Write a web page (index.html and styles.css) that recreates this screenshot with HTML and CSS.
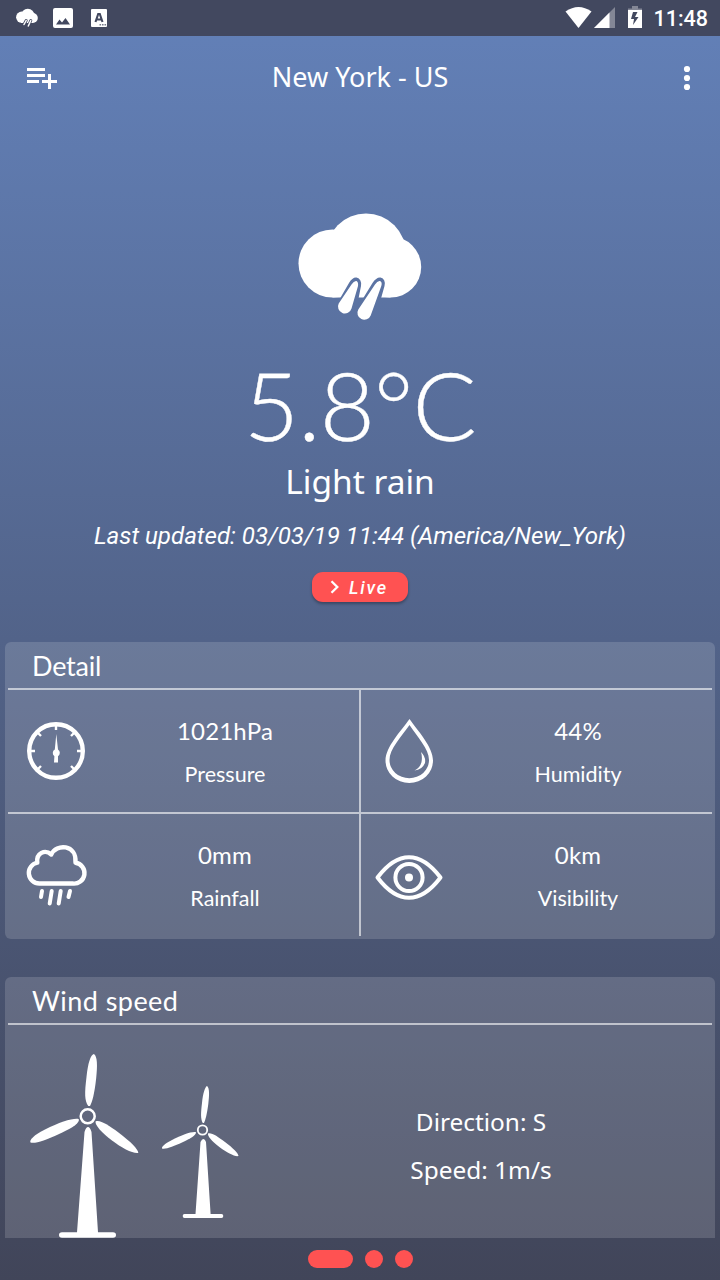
FILE: index.html
```html
<!DOCTYPE html>
<html lang="en">
<head>
<meta charset="utf-8">
<title>Weather</title>
<link rel="stylesheet" href="styles.css">
</head>
<body>
<div class="screen">
  <header class="status">
    <svg class="status-icons" width="110" height="36" viewBox="0 0 110 36" fill="#fff">
      <circle cx="21.700" cy="17.200" r="5.600"/><circle cx="27.800" cy="15.500" r="6.700"/><circle cx="32.800" cy="18" r="5"/><path d="M21 15h12v8H21z"/>
      <path d="M24 24.500l2.200-4M28.300 26l2.500-5.500" stroke="#42485f" stroke-width="3" stroke-linecap="round"/>
      <path d="M24 24.500l2.200-4M28.300 26l2.500-5.500" stroke="#fff" stroke-width="1.500" stroke-linecap="round"/>
      <path fill-rule="evenodd" d="M55 8h16q2 0 2 2v16q0 2-2 2H55q-2 0-2-2V10q0-2 2-2zM56 24.500h14l-4.500-6.500-3.500 4.500-2.500-3z"/>
      <path d="M92 9h14q1 0 1 1v16q0 1-1 1H92q-1 0-1-1V10q0-1 1-1z"/>
      <path d="M95.500 22l2.700-8h1.600l2.700 8M96.500 19.500h5" fill="none" stroke="#42485f" stroke-width="2.100"/>
      <path d="M99.500 24h1.600v1.600h-1.600zM102 24h1.600v1.600H102zM104.500 24h1.600v1.600h-1.600z" fill="#777c8c"/>
    </svg>
    <div class="status-right">
      <svg width="80" height="36" viewBox="566 0 80 36" fill="#fff">
        <path d="M566.500 11.500Q579.500 2.500 592.500 11.500L579.500 28z"/>
        <path d="M616 7v21h-21z" opacity=".35"/><path d="M610.500 12.500V28H595z"/>
        <path d="M629 8.500h4V6h6v2.500h4V10h-14z" opacity=".35"/>
        <path fill-rule="evenodd" d="M629 10h14v18h-14zM634 12l-2 7h3l-1 6 5.500-8H636l2.500-5z"/>
      </svg>
      <span class="clock">11:48</span>
    </div>
  </header>

  <nav class="toolbar">
    <svg width="32" height="24" viewBox="26 67 32 24" fill="#fff"><path d="M27 69h18v3H27zM27 75h18v3H27zM27 81h12v3H27zM42 81h15v3H42zM48 75h3v15h-3z"/></svg>
    <h1 class="city">New York - US</h1>
    <svg width="32" height="26" viewBox="671 65 32 26" fill="#fff"><circle cx="687" cy="69" r="3.100"/><circle cx="687" cy="78" r="3.100"/><circle cx="687" cy="87" r="3.100"/></svg>
  </nav>

  <main class="content">
    <section class="now">
      <svg class="cloud" width="126" height="112" viewBox="297 211 126 112" fill="#fff">
        <defs><mask id="rain-gap" maskUnits="userSpaceOnUse" x="297" y="211" width="126" height="112">
          <path fill="#fff" d="M297 211h126v112H297z"/>
          <path fill="#000" d="M340 298.500L349 283Q352.500 277 356.500 277.500Q362 279 361 286L358.500 298.500zM363 298.500L372.500 283Q376.500 277 380.500 277.500Q386 279 384.500 286L381 298.500z"/>
        </mask></defs>
        <g mask="url(#rain-gap)"><circle cx="332.500" cy="263.500" r="34"/><circle cx="366" cy="253.500" r="40"/><circle cx="390.700" cy="267" r="30.500"/><path d="M332.500 250h58v47.500h-58z"/></g>
        <path d="M351.500 284.500Q354 280.500 356.500 281Q358.500 282 358 286L351.500 308.500A6.900 6.900 0 1 1 338.700 303.500zM375 284.500Q377.500 280.500 380 281Q382.500 282 381.300 286L370.700 315.500A6.900 6.900 0 1 1 358.300 309.500z"/>
      </svg>
      <div class="temp">5.8°C</div>
      <div class="condition">Light rain</div>
      <div class="updated">Last updated: 03/03/19 11:44 (America/New_York)</div>
      <button class="live"><svg width="10" height="16" viewBox="0 0 10 16"><path d="M1.500 2.200L7.300 8l-5.800 5.800" fill="none" stroke="#fff" stroke-width="2.300"/></svg><span>Live</span></button>
    </section>

    <section class="card">
      <h2 class="card-title">Detail</h2>
      <div class="grid">
        <div class="cell">
          <svg width="96" height="122" viewBox="8 690 96 122" fill="none" stroke="#fff">
            <circle cx="56" cy="751" r="26.800" stroke-width="4.400"/>
            <path stroke-width="2.400" d="M56 724v6M29 751h6M77 751h6M37 732l4 4M75 732l-4 4M37 770l4-4M75 770l-4-4"/>
            <path fill="#fff" stroke="none" d="M56.300 734L58 749.500A4 4 0 0 1 58 756.200L58 762.500h-4l.4-6.300A4 4 0 0 1 54.800 749.500z"/>
          </svg>
          <div class="reading"><span class="value">1021hPa</span><span class="label">Pressure</span></div>
        </div>
        <div class="cell cell-right">
          <svg width="96" height="122" viewBox="361 690 96 122" fill="#fff">
            <path fill-rule="evenodd" d="M409.500 719C418 731 433 747 433 760.500A23.700 22.500 0 0 1 385.500 760.500C385.500 747 401 731 409.500 719zM409.500 725C401 737 389.500 749 389.500 760A19.700 18.200 0 0 0 429 760C429 749 417.500 737 409.500 725z"/>
            <path d="M421 752Q426 757 425 763Q422 770 414.500 770.500Q420 768 421.500 762Q422.500 757 421 752z"/>
          </svg>
          <div class="reading"><span class="value">44%</span><span class="label">Humidity</span></div>
        </div>
        <div class="cell cell-bottom">
          <svg width="96" height="122" viewBox="8 814 96 122" fill="none" stroke="#fff" stroke-width="4.400" stroke-linecap="round">
            <path stroke-linejoin="round" d="M39.500 883.500a10.500 10.500 0 0 1-2.200-20.800C36 853 45 849 51.300 854.500C56 843.500 77 844 75.500 862.700A10.500 10.500 0 0 1 72.500 883.500z"/>
            <path stroke-width="4" d="M42 891l-1 6M51.700 891l-2 12.500M60.700 891l-2 12.500M70 891l-1.500 6"/>
          </svg>
          <div class="reading"><span class="value">0mm</span><span class="label">Rainfall</span></div>
        </div>
        <div class="cell cell-right cell-bottom">
          <svg width="96" height="122" viewBox="361 814 96 122" fill="none" stroke="#fff" stroke-width="4" stroke-linejoin="round">
            <path d="M377.500 877.500C398 850.500 420 850.500 440.500 877.500C420 904.500 398 904.500 377.500 877.500z"/>
            <circle cx="409" cy="877.500" r="13.600"/><circle cx="409" cy="877.500" r="4" fill="#fff" stroke="none"/>
          </svg>
          <div class="reading"><span class="value">0km</span><span class="label">Visibility</span></div>
        </div>
      </div>
    </section>

    <section class="card card-wind">
      <h2 class="card-title title-wind">Wind speed</h2>
      <div class="wind">
        <svg width="242" height="213" viewBox="8 1025 242 213" fill="#fff">
          <path d="M88.300 1106C84.500 1101 84.500 1093 86.500 1077C88 1063 90.500 1055 93.800 1054C97.500 1056 97.500 1066 96.200 1078C94.500 1094 92 1103 90 1106z"/>
          <path d="M78.500 1119C73 1118 60 1122 45 1129.500C34 1135 29 1140 30.500 1142.500C35 1144 46 1140 58 1134.500C70 1129 78 1125 79 1120z"/>
          <path d="M95.500 1121.500C100 1119.500 108 1125 118.500 1132.500C131 1142 138 1149 138.300 1153C133 1154 122 1148 112 1140.500C101 1132 95 1125 95.500 1121.500z"/>
          <circle cx="87.700" cy="1116.300" r="7" fill="none" stroke="#fff" stroke-width="2.500"/>
          <path d="M84.500 1132Q86 1127 88 1127Q90 1127 91.500 1132L98 1232.300h15q3 0 3 2.700t-3 2.700H62q-3 0-3-2.700t3-2.700h15z"/>
          <path d="M202.800 1123C200.500 1119 200.800 1113 202 1103C203 1093 205 1087 207 1086C209.800 1088 209.300 1096 208.300 1104C207 1114 205.500 1120 204 1123z"/>
          <path d="M196 1132.200C191 1131.500 182 1135 172 1140C164 1144 161.500 1147 162 1148.500C166 1149.500 174 1146 182 1142.500C191 1138 196 1135.500 196 1132.200z"/>
          <path d="M208 1133.500C212 1132.500 218 1137 225 1142C233 1148 238.500 1153.500 238.500 1156C235 1157 227 1152.500 220 1147.500C211 1140.500 207.500 1136 208 1133.500z"/>
          <circle cx="202.500" cy="1130" r="4.700" fill="none" stroke="#fff" stroke-width="1.800"/>
          <path d="M200.500 1142Q202 1139 203.300 1139Q205 1139 206 1142L210.600 1214H221.500q1.800 0 1.800 2t-1.800 2H184.500q-1.800 0-1.800-2t1.800-2H195.500z"/>
        </svg>
        <div class="wind-text"><span>Direction: S</span><span>Speed: 1m/s</span></div>
      </div>
    </section>
  </main>
  <footer class="pager"><i class="dot dot-active"></i><i class="dot"></i><i class="dot"></i></footer>
</div>
</body>
</html>
```
FILE: styles.css
```css
* { box-sizing: border-box; }
body { margin: 0; color: #fff; font-family: "Noto Sans", sans-serif; }
svg { display: block; flex: none; }
.screen { width: 720px; height: 1280px; overflow: hidden; display: flex; flex-direction: column; background: linear-gradient(#6381b9, #414559); }
.status { height: 36px; flex: none; display: flex; justify-content: space-between; background: #42485f; }
.status-right { display: flex; padding-right: 12px; gap: 8px; }
.clock { font: 500 21.5px/38px Roboto, sans-serif; }
.toolbar { height: 84px; flex: none; display: flex; align-items: center; justify-content: space-between; padding: 0 17px 0 26px; }
.city { margin: 0; padding: 0 9px 2px 0; font-size: 27px; line-height: 36px; font-weight: 400; }
.content { height: 1118px; flex: none; overflow: hidden; }
.now { height: 522px; display: flex; flex-direction: column; align-items: center; padding-top: 91px; }
.temp { font: 300 95px/96px Lato, sans-serif; margin-top: 33px; letter-spacing: -.8px; -webkit-text-stroke: .4px #fff; }
.condition { font-size: 33.5px; line-height: 46px; margin-top: 6px; }
.updated { font: italic 400 24.1px/32px Roboto, sans-serif; margin-top: 16px; }
.live { display: flex; align-items: center; width: 96px; height: 30px; margin-top: 20px; padding: 0 0 0 18px; gap: 9px; border: 0; border-radius: 11px; background: #ff5252; color: #fff; font: italic 500 18px/30px Roboto, sans-serif; letter-spacing: 1.8px; box-shadow: 0 2px 3px rgba(0,0,0,.3); }
.live span { padding-top: 2px; }
.card { margin: 0 5px; padding: 0 3px 3px; border-radius: 6px; background: rgba(255,255,255,.15); }
.card-title { margin: 0; height: 48px; padding-left: 24px; border-bottom: 2px solid rgba(255,255,255,.6); font: 400 27px/47px Lato, sans-serif; letter-spacing: -.2px; }
.title-wind { letter-spacing: .45px; }
.grid { display: grid; grid-template-columns: 351px 353px; grid-template-rows: 122px 124px; }
.cell { display: flex; }
.cell-right { border-left: 2px solid rgba(255,255,255,.6); }
.cell-bottom { border-top: 2px solid rgba(255,255,255,.6); }
.reading { width: 242px; display: flex; flex-direction: column; align-items: center; padding-top: 25px; font-family: Lato, sans-serif; }
.value { font-size: 24px; line-height: 32px; letter-spacing: .2px; }
.label { font-size: 21.5px; line-height: 28px; margin-top: 13px; }
.card-wind { margin-top: 38px; height: 261px; padding-bottom: 0; border-radius: 6px 6px 0 0; }
.wind { display: flex; }
.wind-text { width: 462px; display: flex; flex-direction: column; align-items: center; padding-top: 79px; font-size: 24.4px; line-height: 36px; gap: 12px; }
.pager { height: 42px; flex: none; display: flex; align-items: center; justify-content: center; gap: 12px; }
.dot { width: 18px; height: 18px; border-radius: 9px; background: #ff5252; }
.dot-active { width: 45px; }
```
